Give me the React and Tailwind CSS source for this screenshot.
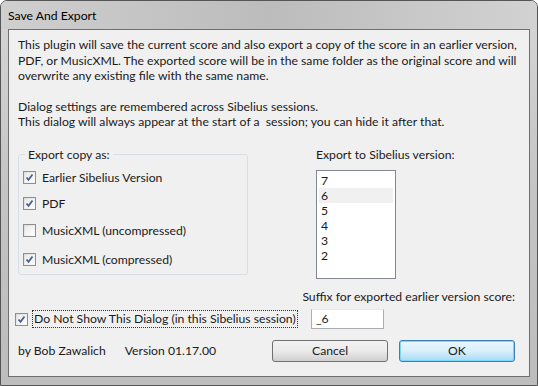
const Check = ({ checked }) => (
  <span className="w-[13px] h-[13px] border border-[#8f8f8f] bg-gradient-to-br from-[#dcdcdc] to-[#fbfbfb] flex items-center justify-center shrink-0">
    <span className="w-[9px] h-[9px] bg-gradient-to-br from-[#e9e9e9] to-white flex items-center justify-center">
      {checked && (
        <svg width="9" height="9" viewBox="0 0 9 9">
          <path d="M1.5 4.5 L3.5 6.8 L7.5 1.5" fill="none" stroke="#4a5f97" strokeWidth="1.8" />
        </svg>
      )}
    </span>
  </span>
);

const Row = ({ checked, children, className = "" }) => (
  <div className={`flex items-center gap-[6px] h-[16px] ${className}`}>
    <Check checked={checked} />
    <span>{children}</span>
  </div>
);

export default function App() {
  return (
    <div
      className="w-[538px] h-[386px] rounded-t-[7px] border border-[#555] bg-gradient-to-b from-[#d6d6d6] via-[#c4c4c4] to-[#bdbdbd] flex flex-col text-[12.2px] text-[#1a1a1a] overflow-hidden whitespace-nowrap"
      style={{ fontFamily: 'Lato, "Open Sans", sans-serif' }}
    >
      <div className="h-[28px] shrink-0 pl-[7px] pt-[6px] text-[12.2px] text-black bg-gradient-to-r from-[#cfcfcf] via-[#bcbcbc] to-[#d2d2d2]">
        Save And Export
      </div>
      <div className="flex-1 mx-[7px] mb-[8px] border border-[#6f6f6f] bg-[#f0f0f0] flex flex-col pl-[9px] pr-[14px] pt-[7px] leading-[15.5px]">
        <p>
          This plugin will save the current score and also export a copy of the score in an earlier version,
          <br />
          PDF, or MusicXML. The exported score will be in the same folder as the original score and will
          <br />
          overwrite any existing file with the same name.
        </p>
        <p className="mt-[15px]">Dialog settings are remembered across Sibelius sessions.</p>
        <p>This dialog will always appear at the start of a&nbsp; session; you can hide it after that.</p>

        <div className="flex mt-[17px]">
          <div className="relative w-[230px] h-[121px] border border-[#d5dfe5] rounded-[3px] mt-[7px] pl-[4px] pt-[15px] flex flex-col">
            <span className="absolute -top-[8px] left-[6px] px-[3px] bg-[#f0f0f0] leading-[15px]">Export copy as:</span>
            <Row checked>Earlier Sibelius Version</Row>
            <Row checked className="mt-[10px]">PDF</Row>
            <Row className="mt-[11px]">MusicXML (uncompressed)</Row>
            <Row checked className="mt-[13px]">MusicXML (compressed)</Row>
          </div>
          <div className="ml-[68px] flex flex-col">
            <span className="leading-[15px]">Export to Sibelius version:</span>
            <div className="mt-[8px] w-[80px] h-[109px] border border-[#828790] bg-white px-[2px] pt-[2px] leading-[15px] text-[12.2px]">
              <div className="px-[2px]">7</div>
              <div className="px-[2px] bg-[#f0f0f0]">6</div>
              <div className="px-[2px]">5</div>
              <div className="px-[2px]">4</div>
              <div className="px-[2px]">3</div>
              <div className="px-[2px]">2</div>
            </div>
          </div>
        </div>

        <div className="flex mt-[10px]">
          <div className="w-[298px]" />
          <span>Suffix for exported earlier version score:</span>
        </div>
        <div className="flex items-center mt-[5px]">
          <div className="w-[298px] flex items-center gap-[4px] -ml-[3px]">
            <Check checked />
            <span className="border border-dotted border-[#333] px-[1px] leading-[16px]">
              Do Not Show This Dialog (in this Sibelius session)
            </span>
          </div>
          <div className="w-[73px] h-[20px] border border-[#abadb3] border-t-[#e3e9ef] bg-white pl-[4px] leading-[18px] -ml-[2px]">
            _6
          </div>
        </div>
        <div className="flex items-center mt-[11px]">
          <span>by Bob Zawalich</span>
          <span className="ml-[19px]">Version 01.17.00</span>
          <button className="ml-auto w-[116px] h-[22px] rounded-[3px] border border-[#707070] bg-gradient-to-b from-[#f2f2f2] via-[#ebebeb] to-[#d0d0d0] text-[12.2px] leading-[20px]">
            Cancel
          </button>
          <button className="ml-[11px] w-[116px] h-[22px] rounded-[3px] border border-[#3c7fb1] bg-gradient-to-b from-[#eaf6fd] via-[#d9f0fc] to-[#a7d9f5] shadow-[inset_0_0_0_1px_#7ad7f7] text-[12.2px] leading-[20px]">
            OK
          </button>
        </div>
      </div>
    </div>
  );
}
